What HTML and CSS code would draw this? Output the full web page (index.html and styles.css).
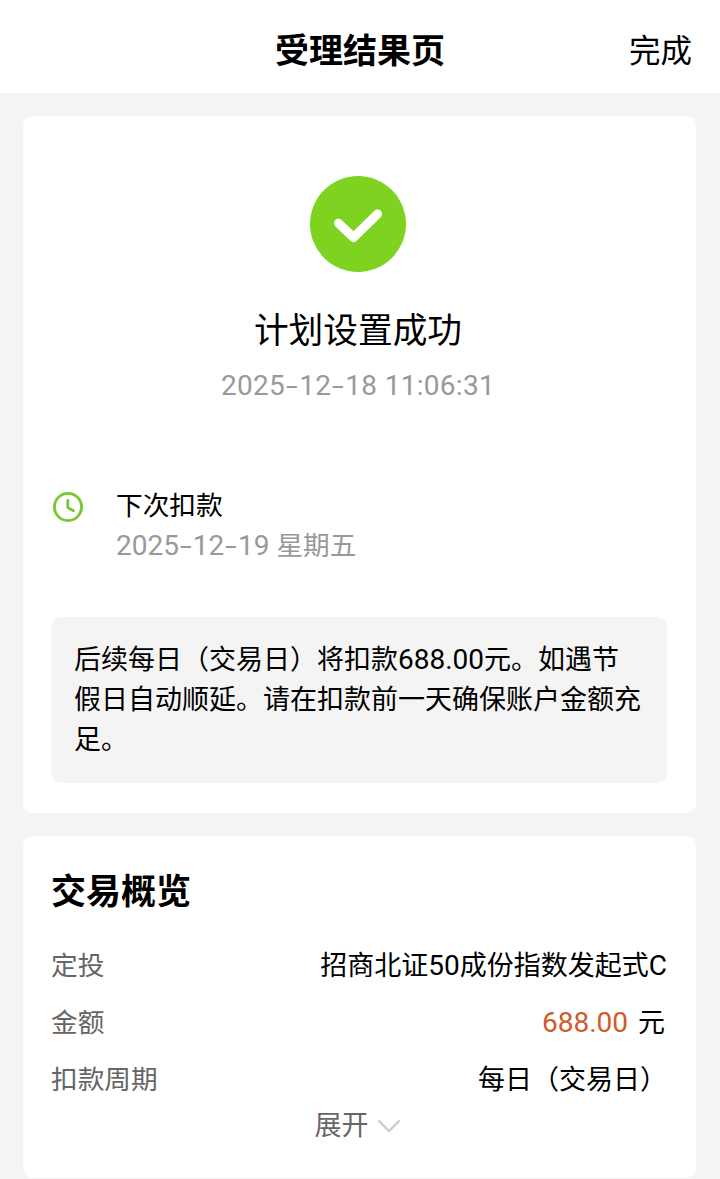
FILE: index.html
```html
<!DOCTYPE html>
<html lang="zh-CN">
<head>
  <meta charset="UTF-8" />
  <meta name="viewport" content="width=device-width, initial-scale=1.0" />
  <title>受理结果页</title>
  <link rel="stylesheet" href="styles.css">
</head>
<body>
  <header class="topbar">
    <h1>受理结果页</h1>
    <a class="done">完成</a>
  </header>

  <main>
    <section class="card result">
      <svg class="icon-success" viewBox="0 0 96 96" aria-hidden="true">
        <circle cx="48" cy="48" r="48" fill="#7ed321" />
        <path d="M28.5 47.2 L43.5 61.5 L67.5 38" fill="none" stroke="#fff" stroke-width="9" stroke-linecap="round" stroke-linejoin="round" />
      </svg>
      <h2>计划设置成功</h2>
      <p class="time">2025<span class="dash">-</span>12<span class="dash">-</span>18 11:06:31</p>

      <div class="next">
        <svg class="icon-clock" viewBox="0 0 30 30" aria-hidden="true">
          <circle cx="15" cy="15" r="13.6" />
          <path d="M14.8 8.5 V15.6 L20.4 18.8" />
        </svg>
        <div>
          <p class="next-title">下次扣款</p>
          <p class="next-date"><span class="num">2025<span class="dash">-</span>12<span class="dash">-</span>19</span> 星期五</p>
        </div>
      </div>

      <p class="tip">后续每日（交易日）将扣款<span class="num">688.00</span>元。如遇节假日自动顺延。请在扣款前一天确保账户金额充足。</p>
    </section>

    <section class="card overview">
      <h3>交易概览</h3>
      <dl>
        <div class="row">
          <dt>定投</dt>
          <dd>招商北证<span class="num">50</span>成份指数发起式<span class="num">C</span></dd>
        </div>
        <div class="row">
          <dt>金额</dt>
          <dd class="amount"><span class="num price">688.00</span>元</dd>
        </div>
        <div class="row">
          <dt>扣款周期</dt>
          <dd>每日（交易日）</dd>
        </div>
      </dl>
      <div class="expand">
        展开
        <svg class="icon-down" viewBox="0 0 24 14" aria-hidden="true">
          <path d="M1.5 1.5 L12 12 L22.5 1.5" />
        </svg>
      </div>
    </section>
  </main>
</body>
</html>
```
FILE: styles.css
```css
* {
  box-sizing: border-box;
}

body {
  margin: 0;
  background: #f4f4f4;
  color: #000;
  font-family: "Noto Sans CJK SC", sans-serif;
  font-size: 27px;
  line-height: 40px;
}

h1, h2, h3, p, dl, dd {
  margin: 0;
}

/* 数字 */
.num,
.time {
  font-family: Roboto, "Noto Sans CJK SC", sans-serif;
  font-size: 28px;
  line-height: 1;
}

/* 日期里的连接线，比字体自带的宽一些 */
.dash {
  display: inline-block;
  margin: 0 3px;
  transform: scaleX(1.5);
}

.topbar {
  display: grid;
  grid-template-columns: 1fr auto 1fr;
  align-items: center;
  height: 93px;
  padding: 4px 28px 0;
  background: #fff;
}

.topbar h1 {
  grid-column: 2;
  font-size: 34px;
  font-weight: 700;
}

.done {
  justify-self: end;
  font-size: 31.5px;
  line-height: 38px;
  padding-bottom: 2px;
}

main {
  display: flex;
  flex-direction: column;
  gap: 23px;
  padding: 23px 24px 1px 23px;
}

.card {
  background: #fff;
  border-radius: 10px;
  padding: 0 29px 0 28px;
}

.result {
  height: 697px;
  padding-top: 60px;
}

.icon-success {
  display: block;
  width: 96px;
  height: 96px;
  margin: 0 auto 0 259px;
}

.result h2 {
  margin-top: 32px;
  padding-right: 2px;
  font-size: 34.7px;
  font-weight: 400;
  line-height: 48px;
  text-align: center;
}

.time {
  margin-top: 20px;
  padding-right: 2px;
  color: #999;
  letter-spacing: 0.3px;
  text-align: center;
}

.next {
  display: flex;
  gap: 33px;
  margin-top: 84px;
  font-size: 26.7px;
}

.icon-clock {
  width: 30px;
  height: 30px;
  margin: 8px 0 0 2px;
  fill: none;
  stroke: #78c832;
  stroke-width: 2.8;
  stroke-linecap: round;
  stroke-linejoin: round;
}

.next-date {
  color: #999;
}

.next-date .num {
  margin-right: 1px;
}

.tip {
  height: 166px;
  margin-top: 53px;
  padding: 21px 24px 0 23px;
  background: #f4f4f4;
  border-radius: 10px;
}

.overview {
  height: 342px;
  padding-top: 29px;
}

.overview h3 {
  font-size: 35px;
  font-weight: 700;
  line-height: 48px;
}

.overview dl {
  margin-top: 22px;
}

.row {
  display: flex;
  justify-content: space-between;
  height: 57px;
  line-height: 57px;
}

.row dt {
  color: #666;
  font-size: 26.7px;
}

.amount {
  padding-right: 2px;
}

.price {
  margin-right: 10px;
  color: #cf5a26;
}

.expand {
  display: flex;
  justify-content: center;
  align-items: center;
  gap: 8px;
  margin-top: -2px;
  padding-right: 3px;
  color: #666;
}

.icon-down {
  width: 24px;
  height: 14px;
  margin-top: 3px;
  fill: none;
  stroke: #ccc;
  stroke-width: 2.4;
}
```
